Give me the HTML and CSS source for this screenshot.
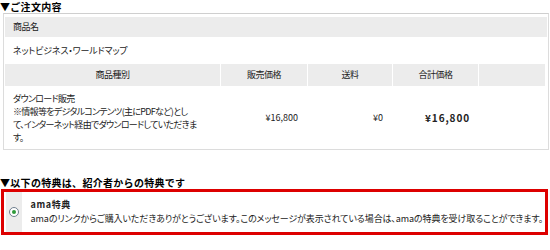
FILE: index.html
```html
<!DOCTYPE html>
<html lang="ja">
<head>
  <meta charset="UTF-8" />
  <title>ご注文内容</title>
  <link rel="stylesheet" href="styles.css">
</head>
<body>

  <h2 class="sec-title">▼ご注文内容</h2>
  <div class="order-box">
    <div class="row-head">商品名</div>
    <div class="row-body">ネットビジネス・ワールドマップ</div>
    <table class="items">
      <thead>
        <tr>
          <th class="col-kind">商品種別</th>
          <th class="col-price">販売価格</th>
          <th class="col-ship">送料</th>
          <th class="col-total">合計価格</th>
          <th></th>
        </tr>
      </thead>
      <tbody>
        <tr>
          <td class="kind">ダウンロード販売<br>※情報等をデジタルコンテンツ(主にPDFなど)とし<br>て、インターネット経由でダウンロードしていただきま<br>す。</td>
          <td class="num">¥16,800</td>
          <td class="num">¥0</td>
          <td class="num total">¥16,800</td>
          <td></td>
        </tr>
      </tbody>
    </table>
  </div>

  <h2 class="sec-title second">▼以下の特典は、紹介者からの特典です</h2>
  <div class="bonus">
    <div class="bonus-check"><span class="radio"></span></div>
    <div class="bonus-text">
      <strong>ama特典</strong>
      <p>amaのリンクからご購入いただきありがとうございます。このメッセージが表示されている場合は、amaの特典を受け取ることができます。</p>
    </div>
  </div>

</body>
</html>
```

FILE: styles.css
```css
/* order confirmation */
body {
  margin: 0;
  font-family: "Noto Sans CJK JP", sans-serif;
  font-size: 9px;
  letter-spacing: -0.5px;
  color: #222;
  background: #fff;
  font-feature-settings: "palt";
}
.sec-title {
  margin: 0;
  font-size: 10px;
  line-height: 13px;
  height: 13px;
  letter-spacing: 0.3px;
  font-weight: bold;
  color: #000;
  font-feature-settings: normal;
}
.sec-title.second {
  margin-top: 26px;
}
.order-box {
  margin: 0 1px 0 3px;
  border: 1px solid #dcdcdc;
  border-top-color: #cfcfcf;
  padding: 3px 1px 0 1px;
}
.row-head {
  background-color: #ececec;
  line-height: 20px;
  padding: 0 8px;
}
.row-body {
  line-height: 27px;
  padding: 0 8px;
  letter-spacing: -0.15px;
}
.items {
  width: 100%;
  border-collapse: separate;
  border-spacing: 1px 0;
  margin: 0 -1px;
  table-layout: fixed;
}
.items th {
  background-color: #ececec;
  font-weight: normal;
  line-height: 22px;
  padding: 0;
}
.col-kind { width: 215px; }
.col-price { width: 86px; }
.col-ship { width: 84px; }
.col-total { width: 85px; }
.items td {
  line-height: 13px;
  vertical-align: middle;
}
.items td.kind {
  padding: 6px 0 5px 8px;
  white-space: nowrap;
  letter-spacing: -0.7px;
}
.items td.num {
  text-align: right;
  padding-right: 9px;
  letter-spacing: 0;
}
.items td.total {
  font-size: 10px;
  font-weight: bold;
  letter-spacing: 0.9px;
  padding-right: 8px;
}
.bonus {
  display: flex;
  margin: 0 2px 0 1px;
  border: 3px solid #dd0000;
  padding: 0 2px;
  height: 40px;
}
.bonus-check {
  width: 18px;
  background-color: #ececec;
  display: flex;
  align-items: center;
  justify-content: center;
}
.radio {
  width: 8px;
  height: 8px;
  border: 1px solid #6f7f8f;
  border-radius: 50%;
  background: #fff;
  display: flex;
  align-items: center;
  justify-content: center;
}
.radio::after {
  content: "";
  width: 4px;
  height: 4px;
  border-radius: 50%;
  background: #2f9a3a;
}
.bonus-text {
  padding: 6px 0 0 9px;
  line-height: 13px;
}
.bonus-text strong {
  display: block;
  font-size: 9px;
  letter-spacing: 0.6px;
}
.bonus-text p {
  margin: 1px 0 0;
  font-size: 9px;
  letter-spacing: -0.1px;
  white-space: nowrap;
}
```
